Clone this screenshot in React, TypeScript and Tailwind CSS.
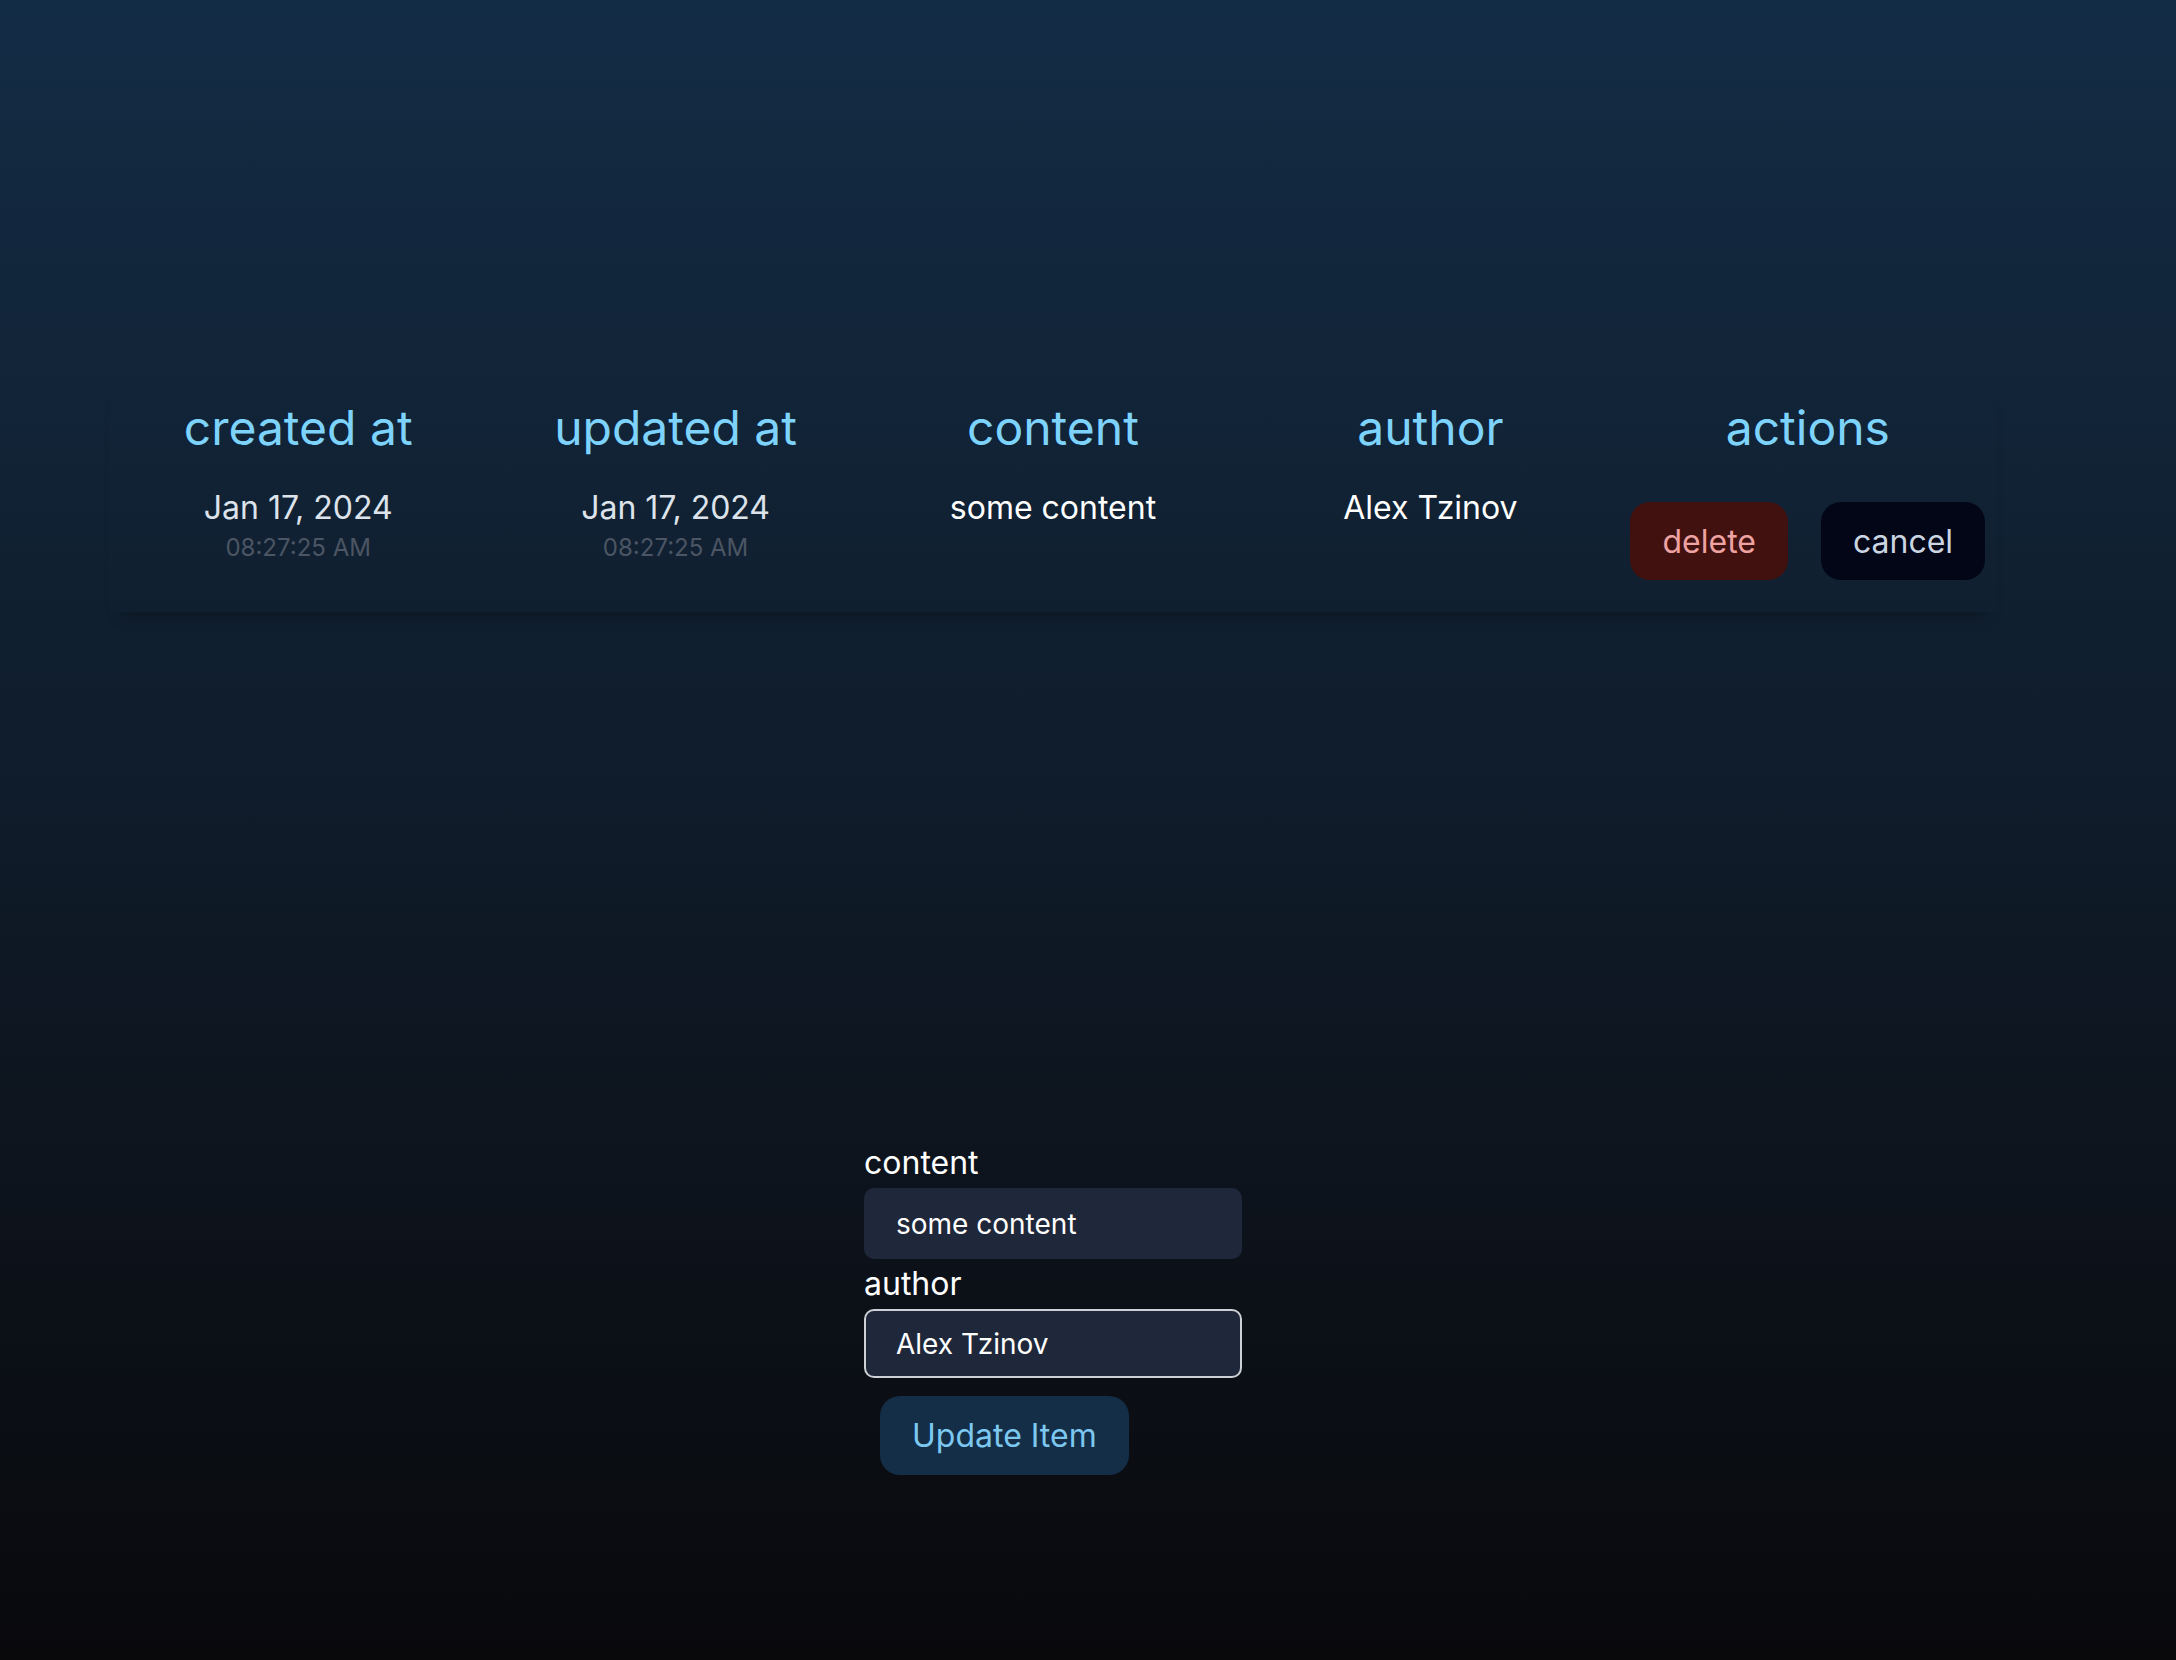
import { useState } from "react"

interface Row {
    id: string,
    createdDate: string,
    createdTime: string,
    updatedDate: string,
    updatedTime: string,
    content: string,
    author: string,
}

const rows: Row[] = [
    {
        id: "1",
        createdDate: "Jan 17, 2024",
        createdTime: "08:27:25 AM",
        updatedDate: "Jan 17, 2024",
        updatedTime: "08:27:25 AM",
        content: "some content",
        author: "Alex Tzinov",
    },
]

const headers = ["created at", "updated at", "content", "author", "actions"]

const DateCell = ({ date, time }: { date: string, time: string }) => {
    return (
        <div className="flex flex-col items-center">
            <div className="text-[32px] leading-[43px] text-[#dde3eb]">{date}</div>
            <div className="text-[24px] leading-[37px] text-[#4b5563]">{time}</div>
        </div>
    )
}

export default function App() {
    const [content, setContent] = useState("some content")
    const [author, setAuthor] = useState("Alex Tzinov")

    return (
        <div className="h-[1660px] w-full bg-gradient-to-b from-[#132c45] via-[#0f1b29] to-[#09090c] font-['Inter',sans-serif] pr-[70px] pt-[385px] flex flex-col items-center">
            <table className="table-fixed w-[1887px] border-collapse shadow-[0_14px_14px_-10px_rgba(0,0,0,0.3)]">
                <thead>
                    <tr>
                        {headers.map((h) => (
                            <th key={h} className="p-4 text-[48px] leading-[53px] font-normal text-[#7dd3fc] text-center">{h}</th>
                        ))}
                    </tr>
                </thead>
                <tbody>
                    {rows.map((r) => (
                        <tr key={r.id}>
                            <td className="p-4 align-top text-center">
                                <DateCell date={r.createdDate} time={r.createdTime} />
                            </td>
                            <td className="p-4 align-top text-center">
                                <DateCell date={r.updatedDate} time={r.updatedTime} />
                            </td>
                            <td className="p-4 align-top text-center text-[32px] leading-[43px] text-white">{r.content}</td>
                            <td className="p-4 align-top text-center text-[32px] leading-[43px] text-white">{r.author}</td>
                            <td className="p-4 align-top">
                                <div className="flex justify-center gap-[33px] py-4">
                                    <button className="h-[78px] px-8 rounded-[20px] bg-[#41110f] text-[#eea2a2] text-[32px] leading-[43px]">delete</button>
                                    <button className="h-[78px] px-8 rounded-[20px] bg-[#020617] text-[#cbd5e1] text-[32px] leading-[43px]">cancel</button>
                                </div>
                            </td>
                        </tr>
                    ))}
                </tbody>
            </table>

            <form className="mt-[533px] w-[378px] flex flex-col" onSubmit={(e) => e.preventDefault()}>
                <label className="text-[32px] leading-[36px] mb-[7px] text-white">content</label>
                <input
                    value={content}
                    onChange={(e) => setContent(e.target.value)}
                    className="h-[71px] rounded-[10px] bg-[#1f283a] px-[30px] text-[28px] text-white outline-none border-2 border-transparent"
                />
                <label className="mt-[7px] mb-[7px] text-[32px] leading-[36px] text-white">author</label>
                <input
                    value={author}
                    onChange={(e) => setAuthor(e.target.value)}
                    className="h-[69px] rounded-[10px] bg-[#1f283a] px-[30px] text-[28px] text-white outline-none border-2 border-[#cdd1d6]"
                />
                <div>
                    <button type="submit" className="mt-[18px] ml-4 h-[79px] px-8 rounded-[20px] bg-[#142e47] text-[#7cc8f0] text-[32px] leading-[43px]">Update Item</button>
                </div>
            </form>
        </div>
    )
}
